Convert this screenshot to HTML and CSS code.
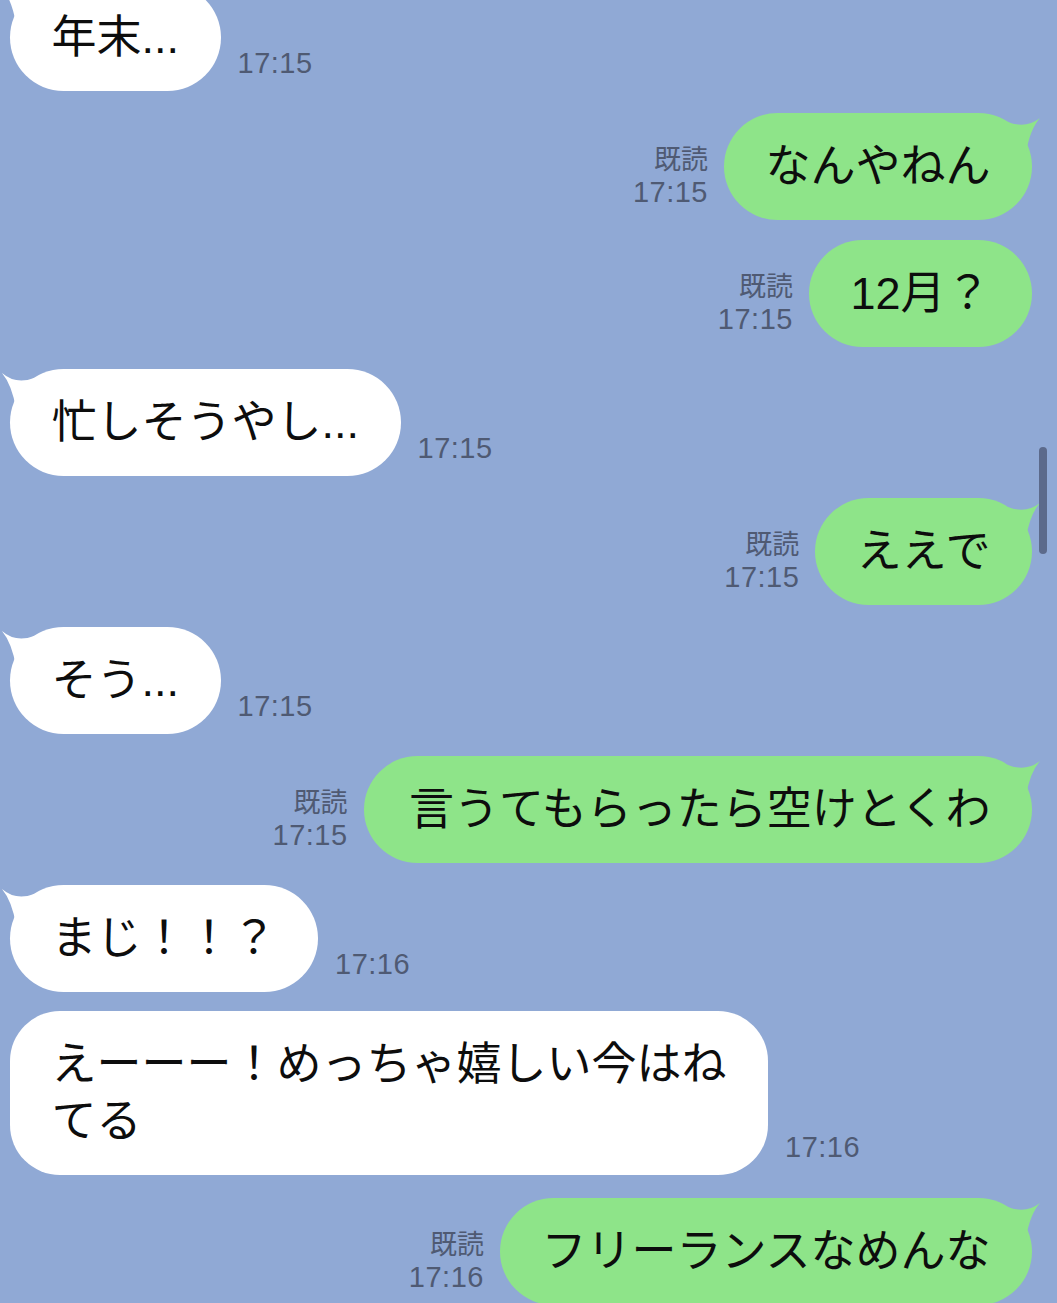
FILE: index.html
```html
<!DOCTYPE html>
<html lang="ja">
<head>
<meta charset="utf-8">
<title>LINE</title>
<link rel="stylesheet" href="styles.css">
</head>
<body>
<div class="chat">
  <div class="row in first">
    <div class="bubble white tail"><svg class="tl" width="40" height="40" viewBox="-10 0 40 40"><path d="M-8 4 Q6 16 24 9 L24 40 L6 40 Q2 16 -8 4 Z"/></svg>年末...</div>
    <div class="time">17:15</div>
  </div>
  <div class="row out">
    <div class="meta"><span class="read">既読</span><span class="t">17:15</span></div>
    <div class="bubble green tail"><svg class="tr" width="40" height="40" viewBox="-30 0 40 40"><path d="M8 5 Q-6 16 -24 9 L-24 40 L-6 40 Q-2 16 8 5 Z"/></svg>なんやねん</div>
  </div>
  <div class="row out g20">
    <div class="meta"><span class="read">既読</span><span class="t">17:15</span></div>
    <div class="bubble green">12月？</div>
  </div>
  <div class="row in">
    <div class="bubble white tail"><svg class="tl" width="40" height="40" viewBox="-10 0 40 40"><path d="M-8 4 Q6 16 24 9 L24 40 L6 40 Q2 16 -8 4 Z"/></svg>忙しそうやし...</div>
    <div class="time">17:15</div>
  </div>
  <div class="row out">
    <div class="meta"><span class="read">既読</span><span class="t">17:15</span></div>
    <div class="bubble green tail"><svg class="tr" width="40" height="40" viewBox="-30 0 40 40"><path d="M8 5 Q-6 16 -24 9 L-24 40 L-6 40 Q-2 16 8 5 Z"/></svg>ええで</div>
  </div>
  <div class="row in">
    <div class="bubble white tail"><svg class="tl" width="40" height="40" viewBox="-10 0 40 40"><path d="M-8 4 Q6 16 24 9 L24 40 L6 40 Q2 16 -8 4 Z"/></svg>そう...</div>
    <div class="time">17:15</div>
  </div>
  <div class="row out">
    <div class="meta"><span class="read">既読</span><span class="t">17:15</span></div>
    <div class="bubble green tail wider"><svg class="tr" width="40" height="40" viewBox="-30 0 40 40"><path d="M8 5 Q-6 16 -24 9 L-24 40 L-6 40 Q-2 16 8 5 Z"/></svg>言うてもらったら空けとくわ</div>
  </div>
  <div class="row in">
    <div class="bubble white tail"><svg class="tl" width="40" height="40" viewBox="-10 0 40 40"><path d="M-8 4 Q6 16 24 9 L24 40 L6 40 Q2 16 -8 4 Z"/></svg>まじ！！？</div>
    <div class="time">17:16</div>
  </div>
  <div class="row in g19">
    <div class="bubble white wide">えーーー！めっちゃ嬉しい今はねてる</div>
    <div class="time">17:16</div>
  </div>
  <div class="row out g23">
    <div class="meta"><span class="read">既読</span><span class="t">17:16</span></div>
    <div class="bubble green tail"><svg class="tr" width="40" height="40" viewBox="-30 0 40 40"><path d="M8 5 Q-6 16 -24 9 L-24 40 L-6 40 Q-2 16 8 5 Z"/></svg>フリーランスなめんな</div>
  </div>
  <div class="scrollbar"></div>
</div>
</body>
</html>
```
FILE: styles.css
```css
html, body {
  margin: 0;
  padding: 0;
  background: #90a9d5;
}
body {
  height: 1303px;
  overflow: hidden;
}
.chat {
  position: relative;
  display: flex;
  flex-direction: column;
  height: 1303px;
  overflow: hidden;
}
.row {
  display: flex;
  align-items: flex-end;
  margin-top: 22px;
  flex-shrink: 0;
}
.row.first { margin-top: -16px; }
.row.g20 { margin-top: 20px; }
.row.g19 { margin-top: 19px; }
.row.g23 { margin-top: 23px; }
.row.in {
  justify-content: flex-start;
  padding-left: 10px;
}
.row.out {
  justify-content: flex-end;
  padding-right: 25px;
}
.bubble {
  position: relative;
  font-family: "Liberation Sans", "Noto Sans CJK JP", sans-serif;
  font-size: 45px;
  line-height: 57px;
  color: #0d0d0d;
  padding: 25px 41.5px;
  border-radius: 54px;
  white-space: nowrap;
}
.bubble.wider {
  padding-left: 45.5px;
}
.bubble.wide {
  white-space: normal;
  width: 676px;
  padding-right: 40.5px;
  border-radius: 50px;
}
.bubble.white { background: #ffffff; }
.bubble.green { background: #8ee489; }
.bubble svg {
  position: absolute;
  top: 0;
  overflow: visible;
}
.bubble svg.tl { left: -10px; }
.bubble svg.tr { right: -10px; }
.bubble.white svg path { fill: #ffffff; }
.bubble.green svg path { fill: #8ee489; }
.time {
  font-family: "Liberation Sans", sans-serif;
  font-size: 29px;
  letter-spacing: 0.5px;
  line-height: 28px;
  color: #4f5a73;
  margin-left: 17px;
  margin-bottom: 14px;
}
.meta {
  display: flex;
  flex-direction: column;
  align-items: flex-end;
  margin-right: 16px;
  margin-bottom: 14px;
  color: #4f5a73;
}
.meta .read {
  font-family: "Noto Sans CJK JP", sans-serif;
  font-size: 27px;
  line-height: 36px;
  margin-bottom: 2px;
}
.meta .t {
  font-family: "Liberation Sans", sans-serif;
  font-size: 29px;
  letter-spacing: 0.5px;
  line-height: 28px;
}
.scrollbar {
  position: absolute;
  left: 1039px;
  top: 447px;
  width: 8px;
  height: 107px;
  border-radius: 4px;
  background: #5c6a8b;
}
```
